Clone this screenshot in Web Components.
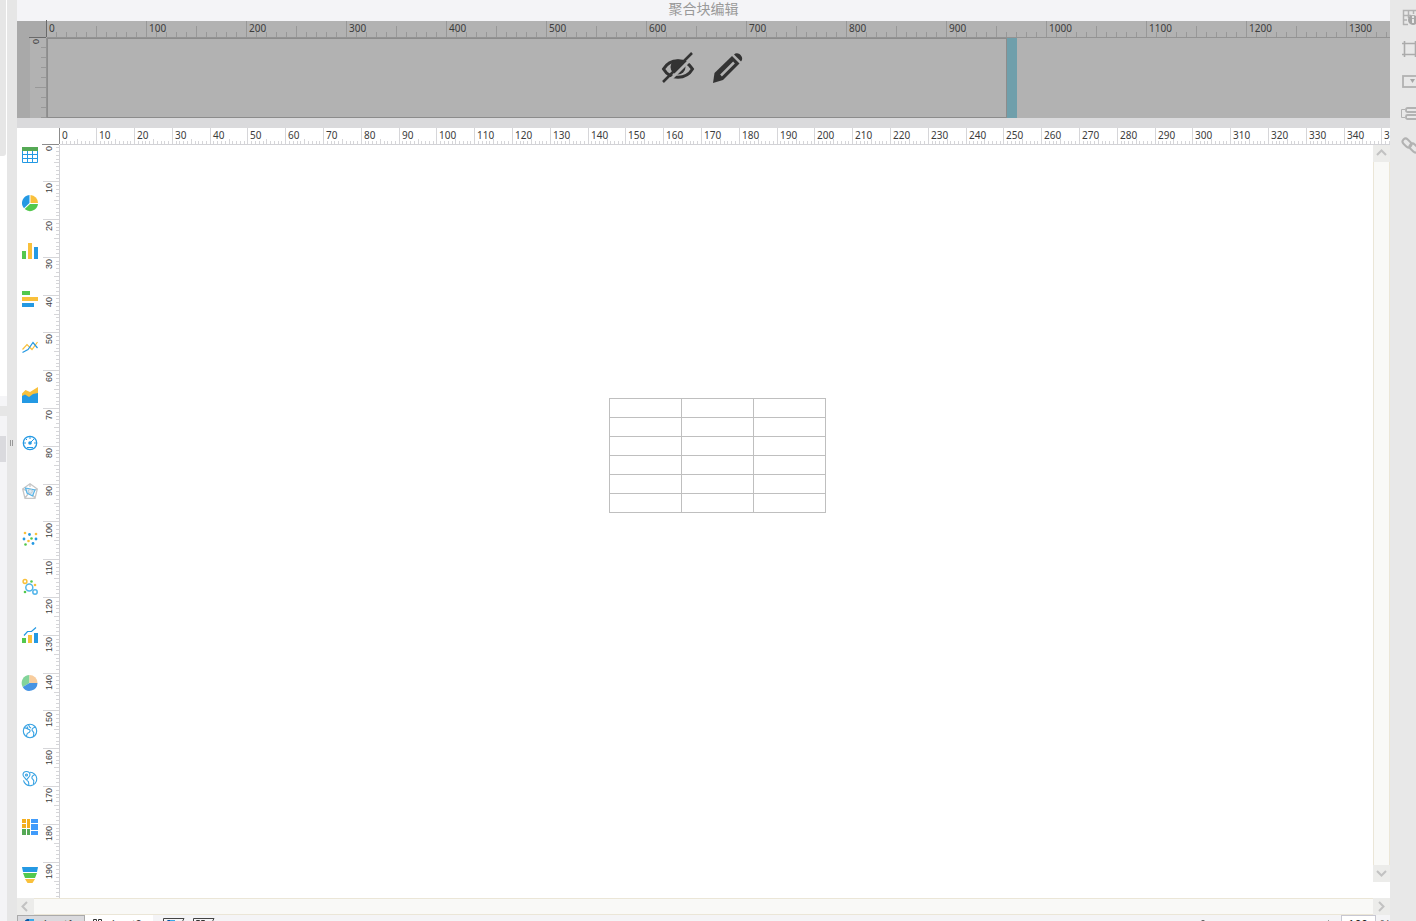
<!DOCTYPE html>
<html lang="zh-CN">
  <head>
    <meta charset="UTF-8" />
    <meta name="viewport" content="width=device-width, initial-scale=1.0" />
    <title>聚合块编辑</title>
    <style>
      html,
      body {
        height: 100%;
        margin: 0;
        overflow: hidden;
      }
      body {
        font-family: "Noto Sans", "Noto Sans CJK SC", sans-serif;
        background: #f4f4f6;
      }
    </style>
  </head>
  <body>
    <block-editor></block-editor>
    <script>
      const BLUE = "#2499e3";
      const YELLOW = "#f9c03b";
      const GREEN = "#53c84d";

      const toolIcons = {
        表格: `<path fill="#55a955" d="M0 0h16v4H0z"/><path fill="none" stroke="${BLUE}" d="M.5 4v11.500h15V4M5.500 4v12M10.500 4v12M0 7.500h16M0 11.500h16"/>`,
        饼图: `<path fill="${YELLOW}" d="M8.500 0a8 8 0 0 1 7.500 8H8.500z"/><path fill="${BLUE}" d="M7.500 0v8L2 13.300A8 8 0 0 1 7.500 0z"/><path fill="${GREEN}" d="M8 9h8a8 8 0 0 1-13.300 5z"/>`,
        柱形图: `<path fill="${GREEN}" d="M0 8h4v8H0z"/><path fill="${YELLOW}" d="M6 0h4v16H6z"/><path fill="${BLUE}" d="M12 4h4v12h-4z"/>`,
        条形图: `<path fill="${GREEN}" d="M0 0h8v4H0z"/><path fill="${YELLOW}" d="M0 6h16v4H0z"/><path fill="${BLUE}" d="M0 12h12v4H0z"/>`,
        折线图: `<path fill="none" stroke="${YELLOW}" stroke-width="1.200" d="M.5 10.500 5 5.500l5 5L15.500 3"/><path fill="none" stroke="${BLUE}" stroke-width="1.200" d="M.5 13.500 6 10.500l5-7 4.500 5.500"/>`,
        面积图: `<path fill="${YELLOW}" d="M0 6.500 3.500 3 8 5 16 0v16H0z"/><path fill="${BLUE}" d="M0 9l3-1.500L7 10l4-3 5-1v10H0z"/>`,
        仪表盘: `<circle cx="8" cy="8" r="6.700" fill="none" stroke="${BLUE}" stroke-width="1.300"/><path stroke="${BLUE}" d="M8 2v2M2 8h2M12 8h2M4 4l1 1M5 12.500h6M8 8l4-4" fill="none"/><circle cx="8" cy="8" r="1.800" fill="${BLUE}"/>`,
        雷达图: `<path fill="none" stroke="#c6c6c6" stroke-width="1.300" d="M8 .7 15.300 6 13 15.300H3L.7 6zM8 1v3M1 6l4 2M15 6l-4 2M3 15l3-4M13 15l-3-4"/><path fill="#dbeaf5" stroke="#55b4e8" stroke-width="1.200" d="m3.500 5 9.500 2-2.500 6L5 10z"/><circle cx="8.300" cy="8.300" r="2" fill="none" stroke="#bcc8cf"/>`,
        散点图: `<g fill="${YELLOW}"><circle cx="3" cy="2" r="1.300"/><circle cx="14" cy="3" r="1.300"/><circle cx="6.500" cy="10" r="1.300"/></g><g fill="${BLUE}"><circle cx="7.500" cy="3.500" r="1.400"/><circle cx="2" cy="8" r="1.400"/><circle cx="14" cy="8" r="1.400"/><circle cx="11" cy="12.500" r="1.400"/></g><g fill="${GREEN}"><circle cx="9.500" cy="7.500" r="1.300"/><circle cx="3.500" cy="13.500" r="1.300"/></g>`,
        气泡图: `<g fill="none"><circle cx="7.300" cy="8.500" r="3.500" stroke="#53b5ea" stroke-width="1.500"/><circle cx="3" cy="2.500" r="1.900" stroke="${YELLOW}" stroke-width="1.500"/><circle cx="13" cy="13" r="2.200" stroke="#53b5ea" stroke-width="1.500"/></g><circle cx="9.500" cy="2.500" r="1.300" fill="${GREEN}"/><circle cx="13" cy="6" r="1.300" fill="${YELLOW}"/><circle cx="3" cy="13" r="1.300" fill="${GREEN}"/>`,
        组合图: `<path fill="${GREEN}" d="M0 11h4v5H0z"/><path fill="${YELLOW}" d="M6 8h4v8H6z"/><path fill="${BLUE}" d="M12 6h4v10h-4z"/><path fill="none" stroke="${BLUE}" stroke-width="1.200" d="M2 8.500 5.500 4.500h4L14 .5"/>`,
        自定义图表: `<path fill="#82d49a" d="M7.500 8V0A8 8 0 0 0 .7 12z"/><path fill="#f8cd9e" d="M7.500 8V0a8 8 0 0 1 8 8z"/><path fill="#4794e3" d="M7.500 8h8A8 8 0 0 1 .7 12z"/>`,
        地图: `<g fill="none" stroke="#37a2e3" stroke-width="1.100"><circle cx="8" cy="8" r="6.700"/><path d="M2 5c3-.5 3 1 5 1.500s1 3-1 3.500 0 2-2 3M6 1.500c2 1 0 2 3 3.500M13.500 4C10 5 9 7 11 8.500s0 4 .5 5M5 3.500l1 2"/></g>`,
        位置地图: `<g fill="none" stroke="#37a2e3" stroke-width="1.100"><path d="M8 1.300a6.700 6.700 0 1 1-6.500 8"/><path d="M4.500 9C2 6 1 5 1 4a3.500 3.500 0 0 1 7 0c0 1-1 2-3.500 5zM13 3.500C9.500 5 9 7 11 8.500s0 4 .5 5M5 9.500c3 1 1 3 2 5"/><circle cx="4.500" cy="4" r="1"/></g>`,
        矩形树图: `<path fill="#f3ae1e" d="M0 0h4v4H0zM0 5h4v4H0zM5 0h3v9H5z"/><path fill="#55a955" d="M0 10h4v6H0zM5 10h3v6H5z"/><path fill="#409bfb" d="M9 0h7v4H9zM9 5h7v6H9zM9 12h7v4H9z"/>`,
        漏斗图: `<path fill="${BLUE}" d="M0 0h16l-1 5H1z"/><path fill="${GREEN}" d="M1 6h14l-2 5H3z"/><path fill="${YELLOW}" d="M3 12h10l-2.500 4h-5z"/>`,
      };

      const panelIcons = {
        单元格属性: `<path d="M1.500 16V1.500H20M1 6.500h8M6.500 1v8M11.500 1v4M16 1v4M1 15.500h5M1 11h4" fill="none" stroke="#b2b2b2" stroke-width="1.500"/><circle cx="11" cy="11" r="5" fill="#a6a6a6"/><path d="M11 10v4" stroke="#e8e8e8" stroke-width="2"/><circle cx="11" cy="8" r="1.200" fill="#e8e8e8"/>`,
        单元格元素: `<path d="M2.500 2.500h11v11h-11zM0 2.500h3M2.500 0v3M0 13.500h3M2.500 16v-3M13.500 0v16M13 2.500h3M13 13.500h3" fill="none" stroke="#ababab" stroke-width="1.600"/>`,
        控件设置: `<rect x="1" y="3" width="20" height="11" fill="none" stroke="#b2b2b2" stroke-width="1.800"/><path d="M8 6h5l-2.500 4z" fill="#a6a6a6"/>`,
        条件属性: `<path d="M3 4.500H-.5v8H3" fill="none" stroke="#b2b2b2"/><g fill="none" stroke="#b2b2b2" stroke-width="1.800"><rect x="4" y="3" width="14" height="4" rx="1.500"/><rect x="4" y="10" width="14" height="4" rx="1.500"/></g>`,
        超级链接: `<g fill="none" stroke="#b2b2b2" stroke-width="2"><rect x="0" y="3" width="10" height="6" rx="3" transform="rotate(45 5 6)"/><rect x="7" y="8" width="10" height="6" rx="3" transform="rotate(45 12 11)"/></g>`,
      };

      function svg(body, width, height) {
        return `<svg width="${width}" height="${height}" viewBox="0 0 ${width} ${height}" overflow="visible" aria-hidden="true">${body}</svg>`;
      }

      // Ruler along one side of a canvas. The zero tick sits on the pixel
      // just before the canvas so that both rulers share a corner.
      class AxisRuler extends HTMLElement {
        constructor() {
          super();
          this.attachShadow({ mode: "open" });
          this.shadowRoot.innerHTML = `
            <style>
              :host {
                display: block;
                position: relative;
                min-width: 0;
                min-height: 0;
                background: var(--ruler-bg);
              }
              svg {
                position: absolute;
                inset: 0;
                overflow: visible;
              }
              path { fill: var(--ruler-tick); shape-rendering: crispEdges; }
              .axis { fill: var(--ruler-axis); }
              .zero { fill: var(--ruler-zero); }
              text { fill: var(--ruler-text); font: 10px "Noto Sans", sans-serif; }
              :host([vertical]) text { font: 9px "Liberation Sans", sans-serif; }
            </style>
            <svg width="100%" height="100%"></svg>
          `;
        }

        connectedCallback() {
          this._observer = new ResizeObserver(() => this._draw());
          this._observer.observe(this);
        }

        disconnectedCallback() {
          this._observer.disconnect();
        }

        _draw() {
          const vertical = this.hasAttribute("vertical");
          const step = this.getAttribute("unit") === "mm" ? 96 / 25.4 : 10;
          const scale = Number(this.getAttribute("scale"));
          const mid = Number(this.getAttribute("mid"));
          const minor = Number(this.getAttribute("minor"));
          const length = vertical ? this.clientHeight : this.clientWidth;
          const bar = (pos, size) =>
            vertical
              ? `M${16 - size} ${pos}h${size}v1h-${size}z`
              : `M${pos} ${16 - size}h1v${size}h-1z`;
          let ticks = "";
          let labels = "";
          for (let i = 0; Math.floor(i * step) - 1 < length; i++) {
            const pos = Math.floor(i * step) - 1;
            if (i % 10 === 0) {
              if (i > 0) ticks += bar(pos, 16);
              if (pos + 4 < length) {
                labels += vertical
                  ? `<text text-anchor="end" transform="translate(9 ${pos + 2}) rotate(-90)">${i * scale}</text>`
                  : `<text x="${pos + 3}" y="11">${i * scale}</text>`;
              }
            } else {
              ticks += bar(pos, i % 5 === 0 ? mid : minor);
            }
          }
          const axis = vertical
            ? `M16 0h1v${length}h-1z`
            : `M0 16h${length}v1H0z`;
          this.shadowRoot.querySelector("svg").innerHTML =
            `<path d="${ticks}"/><path class="axis" d="${axis}"/>` +
            `<path class="zero" d="${bar(-1, 17)}"/>${labels}`;
        }
      }
      customElements.define("axis-ruler", AxisRuler);

      class ToolButton extends HTMLElement {
        constructor() {
          super();
          this.attachShadow({ mode: "open" });
          this.shadowRoot.innerHTML = `
            <style>
              :host { display: flex; }
              button {
                display: flex;
                flex: 1;
                align-items: center;
                justify-content: var(--tool-align, center);
                padding: 0;
                border: 0;
                background: none;
                color: inherit;
              }
            </style>
            <button type="button"><slot></slot></button>
          `;
        }

        connectedCallback() {
          const label = this.getAttribute("label");
          const button = this.shadowRoot.querySelector("button");
          button.setAttribute("aria-label", label);
          button.title = label;
        }
      }
      customElements.define("tool-button", ToolButton);

      class BlockPreview extends HTMLElement {
        constructor() {
          super();
          this.attachShadow({ mode: "open" });
          this.shadowRoot.innerHTML = `
            <style>
              :host {
                display: grid;
                grid-template-columns: 13px 17px 1fr;
                grid-template-rows: 17px 80px;
                position: relative;
                background: #a9a9a9;
                --ruler-bg: #b2b2b2;
                --ruler-tick: #989898;
                --ruler-axis: #939393;
                --ruler-zero: #6a6a6a;
                --ruler-text: #3c3c3c;
              }
              .top { grid-column: 3; }
              .left { grid-column: 2; }
              .canvas { display: flex; background: #b2b2b2; }
              .block {
                box-sizing: border-box;
                width: 960px;
                border: 1px solid #8c8c8c;
              }
              .handle { width: 10px; background: #6f9fab; }
              .actions {
                position: absolute;
                inset: 17px 0 0;
                display: flex;
                justify-content: center;
                gap: 18px;
                padding: 14px 2px 0 0;
                color: #333;
              }
              .actions tool-button { height: 32px; }
            </style>
            <axis-ruler class="top" scale="10" mid="11" minor="5"></axis-ruler>
            <axis-ruler class="left" vertical scale="10" mid="11" minor="5"></axis-ruler>
            <div class="canvas"><div class="block"></div><div class="handle"></div></div>
            <div class="actions">
              <tool-button label="隐藏">${svg(
                `<path d="M1.500 17C8 6 24 6 30.500 17 24 28 8 28 1.500 17z" fill="none" stroke="currentColor" stroke-width="3"/><circle cx="16" cy="15" r="7.500" fill="currentColor"/><path d="M32 4 4 32" stroke="#b2b2b2" stroke-width="3"/><path d="M30 1 1 30" stroke="currentColor" stroke-width="2.500"/>`,
                32, 32
              )}</tool-button>
              <tool-button label="编辑">${svg(
                `<path d="M1 31l1.500-10L20 4l7.500 7.500L11 28z" fill="currentColor"/><path d="M9 23.500 22 10.500" stroke="#b2b2b2" stroke-width="2.500"/><path d="M22 2.500c4-4 11 3 7 7z" fill="currentColor"/>`,
                32, 32
              )}</tool-button>
            </div>
          `;
        }
      }
      customElements.define("block-preview", BlockPreview);

      class ScrollBar extends HTMLElement {
        constructor() {
          super();
          this.attachShadow({ mode: "open" });
        }

        connectedCallback() {
          const vertical = this.hasAttribute("vertical");
          const arrows = vertical
            ? ["m4 10 4.500-4.500L13 10", "m4 6 4.500 4.500L13 6"]
            : ["M10 4 5.500 8.500 10 13", "m6 4 4.500 4.500L6 13"];
          const names = vertical ? ["向上", "向下"] : ["向左", "向右"];
          const button = (i) =>
            `<button type="button" aria-label="${names[i]}">${svg(
              `<path d="${arrows[i]}" fill="none" stroke="#c2c2c2" stroke-width="2"/>`,
              17, 17
            )}</button>`;
          this.shadowRoot.innerHTML = `
            <style>
              :host { display: flex; height: 17px; }
              :host([vertical]) { flex-direction: column; width: 17px; height: auto; }
              button {
                display: flex;
                flex: 0 0 17px;
                padding: 0;
                border: 0;
                background: #ececea;
              }
              .track {
                flex: 1;
                background: #f9f9f7;
                border: solid #ebe6d7;
                border-width: 1px 0;
              }
              :host([vertical]) .track { border-width: 0 1px; }
            </style>
            ${button(0)}<div class="track"></div>${button(1)}
          `;
        }
      }
      customElements.define("scroll-bar", ScrollBar);

      class ChartToolbar extends HTMLElement {
        constructor() {
          super();
          this.attachShadow({ mode: "open" });
          this.shadowRoot.innerHTML = `
            <style>
              :host {
                display: flex;
                flex-direction: column;
                width: 26px;
                padding-top: 3px;
                background: #fff;
              }
              tool-button { height: 48px; flex-shrink: 0; }
            </style>
            ${Object.entries(toolIcons)
              .map(([name, icon]) => `<tool-button label="${name}">${svg(icon, 16, 16)}</tool-button>`)
              .join("")}
          `;
        }
      }
      customElements.define("chart-toolbar", ChartToolbar);

      class BlockCanvas extends HTMLElement {
        constructor() {
          super();
          this.attachShadow({ mode: "open" });
          const row = "<tr><td></td><td></td><td></td></tr>";
          this.shadowRoot.innerHTML = `
            <style>
              :host {
                display: grid;
                grid-template-columns: 26px 17px 1fr 17px;
                grid-template-rows: 17px 1fr;
                min-height: 0;
                overflow: hidden;
                background: #fff;
                --ruler-bg: #fff;
                --ruler-tick: #d6d6d9;
                --ruler-axis: #d2d2d6;
                --ruler-zero: #8c8c8c;
                --ruler-text: #3c3c3c;
              }
              chart-toolbar { grid-row: 1 / 3; min-height: 0; }
              .top { grid-column: 3 / 5; }
              .left { grid-column: 2; }
              .page { position: relative; }
              scroll-bar { margin-bottom: 16px; }
              table {
                position: absolute;
                left: 549px;
                top: 253px;
                border-collapse: collapse;
              }
              td {
                box-sizing: border-box;
                width: 72px;
                height: 19px;
                padding: 0;
                border: 1px solid #bfbfbf;
              }
            </style>
            <chart-toolbar></chart-toolbar>
            <axis-ruler class="top" unit="mm" scale="1" mid="5" minor="3"></axis-ruler>
            <axis-ruler class="left" vertical unit="mm" scale="1" mid="5" minor="3"></axis-ruler>
            <div class="page"><table aria-label="表格">${row.repeat(6)}</table></div>
            <scroll-bar vertical></scroll-bar>
          `;
        }
      }
      customElements.define("block-canvas", BlockCanvas);

      class SheetBar extends HTMLElement {
        constructor() {
          super();
          this.attachShadow({ mode: "open" });
          const grid = `<path d="M1.500 1.500h3v3h-3zM6.500 1.500h3v3h-3zM1.500 6.500h3v3h-3zM6.500 6.500h3v3h-3z" fill="none" stroke="#333"/>`;
          const dash = `<path d="M1 2.500 3 1h2v4H1z" fill="#0a57a4"/><path d="M5 1h5v4H5z" fill="#3aa9ea"/><path d="M1 6h9v4H1z" fill="${BLUE}"/>`;
          const add = (body) =>
            svg(`<path d="M.5 14V.5H21L17 8v6z" fill="none" stroke="#444"/><g transform="translate(2 1)">${body}</g>`, 22, 15);
          this.shadowRoot.innerHTML = `
            <style>
              :host {
                display: flex;
                align-items: flex-start;
                height: 6px;
                overflow: hidden;
                background: #f4f4f6;
                font: 12px "Liberation Sans", sans-serif;
                color: #444;
              }
              button {
                display: flex;
                align-items: flex-start;
                box-sizing: border-box;
                height: 24px;
                padding: 2px 0 0;
                border: 0;
                background: none;
                font: inherit;
                color: inherit;
              }
              .tab {
                width: 68px;
                gap: 3px;
                padding: 2px 0 0 6px;
                background: #fff;
                border: 1px solid #fff;
              }
              .tab[aria-selected="true"] { background: #dadade; border-color: #aaa; }
              .tabs { display: flex; flex: 1; }
              .add { width: 30px; padding-top: 3px; }
              .tabs .tab + .add { margin-left: 10px; }
              input[type="range"] {
                appearance: none;
                width: 130px;
                height: 14px;
                margin: 3px 0 0;
                background: none;
              }
              input[type="range"]::-webkit-slider-thumb {
                appearance: none;
                width: 4px;
                height: 10px;
                border-radius: 2px;
                background: #555;
              }
              .plus { padding-top: 5px; margin: 0 8px 0 3px; }
              input[type="text"] {
                box-sizing: border-box;
                width: 35px;
                height: 20px;
                padding: 0 0 0 6px;
                border: 1px solid #c8c8d2;
                background: #fff;
                font: 12px "Liberation Sans", sans-serif;
                color: #222;
              }
              label { padding: 3px 0 0 4px; width: 10px; }
            </style>
            <div class="tabs" role="tablist">
              <button class="tab" type="button" role="tab" aria-selected="true">${svg(dash, 11, 11)}sheet1</button>
              <button class="tab" type="button" role="tab" aria-selected="false">${svg(grid, 11, 11)}sheet2</button>
              <button class="add" type="button" aria-label="新建决策报表">${add(dash)}</button>
              <button class="add" type="button" aria-label="新建报表">${add(grid)}</button>
            </div>
            <input type="range" min="10" max="400" value="40" aria-label="缩放" />
            <button class="plus" type="button" aria-label="放大">${svg('<path d="M4.500 0v9M0 4.500h9" stroke="#999"/>', 9, 9)}</button>
            <input type="text" id="zoom" value="100" />
            <label for="zoom">%</label>
          `;
        }
      }
      customElements.define("sheet-bar", SheetBar);

      class PropertyPanel extends HTMLElement {
        constructor() {
          super();
          this.attachShadow({ mode: "open" });
          this.shadowRoot.innerHTML = `
            <style>
              :host {
                display: block;
                box-sizing: border-box;
                width: 26px;
                padding-top: 1px;
                overflow: hidden;
                background: #e8e8e8;
                --tool-align: flex-start;
              }
              tool-button { height: 32px; padding-left: 12px; }
            </style>
            ${Object.entries(panelIcons)
              .map(([name, icon]) => `<tool-button label="${name}">${svg(icon, 22, 16)}</tool-button>`)
              .join("")}
          `;
        }
      }
      customElements.define("property-panel", PropertyPanel);

      class BlockEditor extends HTMLElement {
        constructor() {
          super();
          this.attachShadow({ mode: "open" });
          this.shadowRoot.innerHTML = `
            <style>
              :host { display: flex; height: 100vh; }
              .side { display: flex; flex-direction: column; width: 7px; background: #fff; }
              .thumb { width: 6px; height: 156px; background: #e6e6e6; border-radius: 0 0 3px 0; }
              .head { height: 10px; margin-top: 240px; background: #f5f5f7; }
              .gap { height: 10px; background: #e6e6e6; }
              .list { flex: 1; padding-top: 20px; background: #f4f4f6; }
              .selected { width: 6px; height: 26px; background: #dadade; }
              .splitter {
                display: flex;
                justify-content: center;
                gap: 1px;
                width: 10px;
                box-sizing: border-box;
                padding: 440px 1px 0 0;
                background: #e6e6e6;
              }
              .splitter i { width: 1px; height: 6px; background: #999; }
              main { display: flex; flex: 1; flex-direction: column; min-width: 0; overflow: hidden; }
              h1 {
                margin: 0;
                height: 21px;
                background: #f4f4f7;
                color: #999;
                font: 14px/16px "Noto Sans CJK SC", sans-serif;
                text-align: center;
              }
              .strip { height: 10px; background: #dadadc; }
              block-canvas { flex: 1; }
              block-preview, .strip, h1, scroll-bar, sheet-bar { flex-shrink: 0; }
            </style>
            <div class="side">
              <div class="thumb"></div>
              <div class="head"></div>
              <div class="gap"></div>
              <div class="list"><div class="selected"></div></div>
            </div>
            <div class="splitter"><i></i><i></i></div>
            <main>
              <h1>聚合块编辑</h1>
              <block-preview></block-preview>
              <div class="strip"></div>
              <block-canvas></block-canvas>
              <scroll-bar></scroll-bar>
              <sheet-bar></sheet-bar>
            </main>
            <property-panel></property-panel>
          `;
        }
      }
      customElements.define("block-editor", BlockEditor);
    </script>
  </body>
</html>
